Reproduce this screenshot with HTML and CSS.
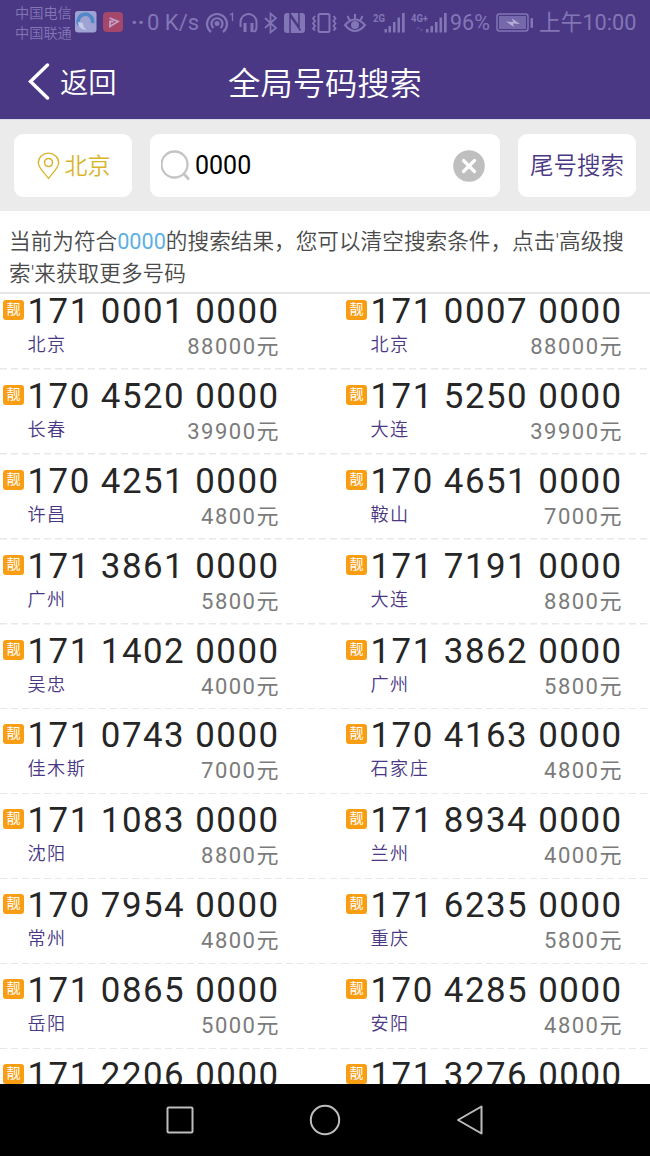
FILE: index.html
```html
<!DOCTYPE html>
<html lang="zh-CN">
<head>
<meta charset="utf-8">
<title>全局号码搜索</title>
<link rel="stylesheet" href="styles.css">
</head>
<body>
<div class="screen">
  <div class="status">
    <div class="carriers"><span>中国电信</span><span>中国联通</span></div>
    <svg class="app-icons" width="48" height="24" viewBox="0 0 48 24">
      <rect x="0" y="0" width="21.500" height="21.500" rx="3" fill="#9fa3d3"/>
      <path d="M4 14A7.300 7.300 0 1 1 17.500 12" fill="none" stroke="#5287c9" stroke-width="3.500"/>
      <path d="M3 11c0 5 4 8 9 8-3-2-4-4-4-7z" fill="#c3c9e8"/>
      <rect x="28" y="1" width="20" height="20" rx="4" fill="#a4476b"/>
      <path d="M34.500 7l8.500 3.500-8 5v-5h3.500" fill="none" stroke="#c5a0c6" stroke-width="1.800"/>
    </svg>
    <span class="dots">··</span>
    <span class="speed">0 K/s</span>
    <svg class="sys-icons" width="246" height="32" viewBox="204 6 246 32" fill="none" stroke="#8276b6" stroke-width="2">
      <g stroke-width="2.200">
        <circle cx="217" cy="22.500" r="2.500" fill="#8276b6" stroke="none"/>
        <path d="M213.500 27a5.500 5.500 0 1 1 7 0M211 31a10 10 0 1 1 12 0"/>
      </g>
      <path d="M230 14l2.500-1.500V20" stroke-width="1.300"/>
      <path d="M240.500 26v-5a8 8 0 0 1 16 0v5c0 3-1 4.500-3 4.500" stroke-width="2"/>
      <path d="M245 22v9M252 22v9" stroke-width="3"/>
      <path d="M265 17l11 10-5.500 4.500v-19L276 17l-11 10" stroke-width="1.700"/>
      <rect x="284" y="12" width="21" height="20" rx="3" fill="#8276b6" stroke="none"/>
      <path d="M290 32V14.500l10.500 15M299 12v14L289.500 12" stroke="#4a3884" stroke-width="1.500"/>
      <rect x="318.500" y="13" width="11" height="18" rx="1.500"/>
      <path d="M315 15l-2 2.500 2 2.500-2 2.500 2 2.500-2 2.500 2 2M333.500 15l2 2.500-2 2.500 2 2.500-2 2.500 2 2.500-2 2" stroke-width="1.800"/>
      <path d="M345 24q10-11 20 0q-10 12-20 0zM355 13v5M347.500 15l2 4M362.500 15l-2 4" stroke-width="2"/>
      <circle cx="355" cy="24" r="4" fill="#8276b6" stroke="none"/>
      <g fill="#8276b6" stroke="none">
        <path d="M384.500 28h2.500v3.500h-2.500zM388.500 25h2.500v6.500h-2.500zM393 21h2.500v10.500H393zM397.500 16.500h2.500v15h-2.500zM402 12h2.700v19.500H402z"/>
        <path d="M426 28h2.500v3.500H426zM430.500 25h2.500v6.500h-2.500zM435 21h2.500v10.500H435zM439.500 16.500h2.500v15h-2.500zM444 12h2.700v19.500H444z"/>
        <path d="M416 28l2-3 2 3zM419.500 28l2 3 2-3z" opacity=".35"/>
        <text x="373" y="20.500" class="net" textLength="12" lengthAdjust="spacingAndGlyphs">2G</text>
        <text x="411" y="20.500" class="net" textLength="17" lengthAdjust="spacingAndGlyphs">4G+</text>
      </g>
    </svg>
    <span class="pct">96%</span>
    <svg class="battery" width="38" height="20" viewBox="0 0 38 20">
      <rect x="1" y="1" width="31" height="17" rx="2.500" fill="none" stroke="#8276b6" stroke-width="1.500"/>
      <rect x="3" y="3" width="27" height="13" fill="#7568ab"/>
      <path d="M10 8.500l7 .5-1-3.500 8 5.500-7-.5 1 3.500z" fill="#b5acd6"/>
      <rect x="34.500" y="5" width="2.500" height="10" rx="1" fill="#8276b6"/>
    </svg>
    <span class="time">上午10:00</span>
  </div>
  <header class="titlebar">
    <a class="back">
      <svg width="22" height="38" viewBox="0 0 22 38"><path d="M19.500 2L2.500 18.500l17 16.500" fill="none" stroke="#fff" stroke-width="3.400" stroke-linecap="round"/></svg>
      <span>返回</span>
    </a>
    <h1>全局号码搜索</h1>
  </header>
  <div class="search">
    <div class="city-pick">
      <svg width="23" height="28" viewBox="0 0 23 28" fill="none" stroke="#d9b52c"><path d="M11.500 26.500C8 21.500 1.300 16 1.300 10.800a10.200 9.700 0 0 1 20.400 0C21.700 16 15 21.500 11.500 26.500z" stroke-width="1.300"/><circle cx="11.500" cy="10.500" r="4" stroke-width="1.600"/></svg>
      <span>北京</span>
    </div>
    <div class="field">
      <svg width="30" height="31" viewBox="0 0 30 31" fill="none" stroke="#c4c4c4" stroke-width="2.300"><circle cx="13.500" cy="14.500" r="13"/><path d="M22.500 23.500l5.500 6" stroke-width="2.600"/></svg>
      <span>0000</span>
      <svg class="clear" width="32" height="32" viewBox="0 0 32 32"><circle cx="16" cy="16" r="15.800" fill="#bfbfbf"/><path d="M10.500 10.500l11 11M21.500 10.500l-11 11" stroke="#fff" stroke-width="3.200" stroke-linecap="round"/></svg>
    </div>
    <div class="tail"><span>尾号搜索</span></div>
  </div>
  <p class="tip">当前为符合<em>0000</em>的搜索结果，您可以清空搜索条件，点击'高级搜<br>索'来获取更多号码</p>
  <main class="list"><div class="grid" id="grid"></div></main>
  <nav class="nav">
    <svg width="28" height="28" viewBox="0 0 28 28"><rect x="1.500" y="1.500" width="25" height="25" rx="1"/></svg>
    <svg width="32" height="32" viewBox="0 0 32 32"><circle cx="16" cy="16" r="14.200"/></svg>
    <svg width="28" height="32" viewBox="0 0 28 32"><path d="M25.500 2.500v27L2 16z" stroke-linejoin="round"/></svg>
  </nav>
</div>
<script src="app.js"></script>
</body>
</html>
```
FILE: styles.css
```css
* { box-sizing: border-box; }
body {
  margin: 0;
  background: #fff;
  font-family: Roboto, "Noto Sans CJK SC", sans-serif;
  font-weight: 400;
}
.screen {
  width: 650px;
  height: 1156px;
  display: flex;
  flex-direction: column;
  overflow: hidden;
}
.status {
  height: 45px;
  flex: none;
  display: flex;
  align-items: center;
  padding-left: 15px;
  background: #4a3884;
  color: #8276b6;
  white-space: nowrap;
}
.carriers {
  width: 60px;
  display: flex;
  flex-direction: column;
  font-size: 14.2px;
  font-weight: 350;
  line-height: 20px;
}
.app-icons { flex: none; }
.dots {
  width: 24px;
  padding-left: 8px;
  font-size: 22px;
  font-weight: 700;
  line-height: 24px;
}
.speed {
  width: 57px;
  font-size: 22px;
  line-height: 24px;
}
.sys-icons { flex: none; }
.net {
  font: 700 11px Roboto, sans-serif;
}
.pct {
  width: 46px;
  font-size: 21.500px;
  line-height: 24px;
}
.battery { flex: none; }
.time {
  margin-left: 5px;
  font-size: 21.700px;
  line-height: 24px;
}
.titlebar {
  position: relative;
  height: 74px;
  flex: none;
  display: flex;
  align-items: center;
  justify-content: center;
  padding-top: 3px;
  background: #4a3884;
  color: #fff;
}
.back {
  position: absolute;
  left: 28px;
  top: 18px;
  display: flex;
  align-items: center;
  gap: 10px;
  font-size: 28.300px;
  font-weight: 350;
  line-height: 38px;
}
.back span { padding-top: 2px; }
.back svg { margin-bottom: 2px; }
.titlebar h1 {
  margin: 0;
  font-size: 32.3px;
  font-weight: 350;
  line-height: 40px;
}
.search {
  height: 92px;
  flex: none;
  display: flex;
  gap: 18px;
  padding: 14px 14px;
  border-top: 1px solid #dcd9ec;
  background: #ebebeb;
}
.city-pick, .field, .tail {
  display: flex;
  align-items: center;
  border-radius: 9px;
  background: #fff;
}
.city-pick {
  width: 118px;
  justify-content: center;
  gap: 5px;
  padding-left: 1px;
  color: #d9b52c;
  font-size: 23px;
  font-weight: 350;
}
.city-pick span, .tail span { padding-bottom: 3px; }
.field {
  width: 350px;
  padding: 0 15px 0 11px;
  gap: 4px;
  color: #000;
  font-size: 25px;
}
.field span { padding-bottom: 1px; }
.clear { margin-left: auto; }
.tail {
  width: 118px;
  justify-content: center;
  color: #4a3884;
  font-size: 23.500px;
  font-weight: 350;
}
.tip {
  height: 83px;
  flex: none;
  margin: 0;
  padding: 15px 9px 0;
  border-bottom: 2px solid #e6e6e6;
  color: #4a4a4a;
  font-size: 21.650px;
  font-weight: 350;
  line-height: 32.400px;
  white-space: nowrap;
}
.tip em {
  color: #5cb1e2;
  font-style: normal;
  font-weight: 400;
}
.list {
  flex: 1;
  min-height: 0;
  overflow: hidden;
}
.grid {
  display: grid;
  grid-template-columns: 343px 307px;
  grid-auto-rows: 84.900px;
  margin-top: -9px;
}
.item {
  display: flex;
  align-items: flex-start;
  padding: 9px 0 0 3px;
  background: repeating-linear-gradient(90deg, #e8e8e8 0 7px, #fff 7px 11px) left bottom / 100% 1.500px no-repeat;
}
.badge {
  width: 21px;
  height: 20px;
  flex: none;
  margin: 6px 3.500px 0 0;
  border-radius: 3px;
  background: #f99d12;
  color: #fff;
  font-size: 14px;
  line-height: 18px;
  text-align: center;
}
.info {
  width: 252.500px;
  letter-spacing: 1.500px;
}
.number {
  color: #262626;
  font-size: 34.850px;
  line-height: 35px;
  white-space: nowrap;
}
.meta {
  display: flex;
  justify-content: space-between;
  align-items: flex-start;
  padding-top: 3px;
}
.city {
  padding-top: 1px;
  color: #4a3884;
  font-size: 18.100px;
  font-weight: 350;
  line-height: 24px;
}
.price {
  color: #7b7b7b;
  font-size: 22px;
  line-height: 29px;
}
.nav {
  height: 72px;
  flex: none;
  display: flex;
  align-items: center;
  justify-content: center;
  gap: 115px;
  background: #000;
}
.nav svg {
  fill: none;
  stroke: #bdbdbd;
  stroke-width: 2;
}
```
FILE: app.js
```
const rows = [
  ["171 0001 0000", "北京", 88000], ["171 0007 0000", "北京", 88000],
  ["170 4520 0000", "长春", 39900], ["171 5250 0000", "大连", 39900],
  ["170 4251 0000", "许昌", 4800], ["170 4651 0000", "鞍山", 7000],
  ["171 3861 0000", "广州", 5800], ["171 7191 0000", "大连", 8800],
  ["171 1402 0000", "吴忠", 4000], ["171 3862 0000", "广州", 5800],
  ["171 0743 0000", "佳木斯", 7000], ["170 4163 0000", "石家庄", 4800],
  ["171 1083 0000", "沈阳", 8800], ["171 8934 0000", "兰州", 4000],
  ["170 7954 0000", "常州", 4800], ["171 6235 0000", "重庆", 5800],
  ["171 0865 0000", "岳阳", 5000], ["170 4285 0000", "安阳", 4800],
  ["171 2206 0000", "", ""], ["171 3276 0000", "", ""]
];
document.getElementById("grid").innerHTML = rows.map(([n, c, p]) => `
  <div class="item"><span class="badge">靓</span><div class="info">
    <div class="number">${n}</div>
    <div class="meta"><span class="city">${c}</span><span class="price">${p ? p + "元" : ""}</span></div>
  </div></div>`).join("");
```
